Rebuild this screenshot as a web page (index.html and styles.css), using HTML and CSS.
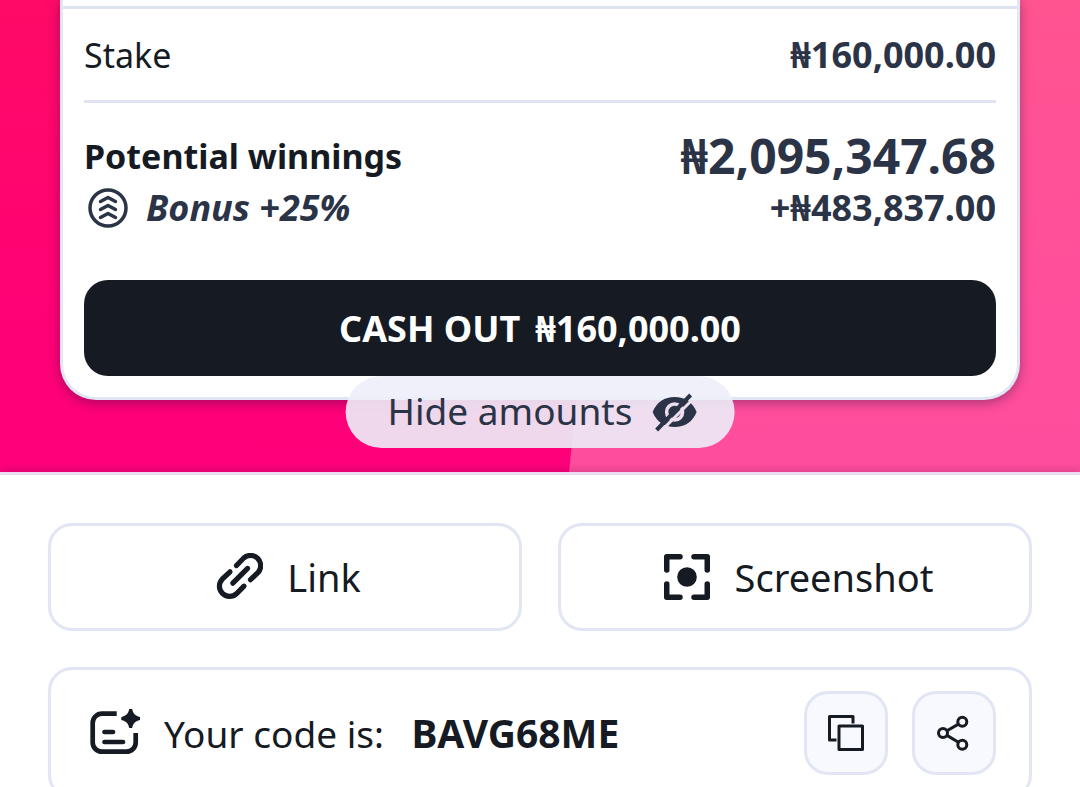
FILE: index.html
```
<!DOCTYPE html>
<html lang="en">

<head>
    <meta charset="utf-8">
    <meta name="viewport" content="width=device-width, initial-scale=1.0">
    <title>Share bet</title>
    <link rel="stylesheet" href="styles.css">
</head>

<body>

    <section class="hero">
        <div class="slip">
            <div class="row stake">
                <span class="label">Stake</span>
                <span class="amount">₦160,000.00</span>
            </div>

            <div class="winnings">
                <div class="row">
                    <strong class="label">Potential winnings</strong>
                    <span class="amount total">₦2,095,347.68</span>
                </div>
                <div class="row">
                    <span class="bonus">
                        <svg width="40" height="40" viewBox="0 0 40 40" fill="none" stroke="currentColor" stroke-width="3.500" stroke-linecap="round" stroke-linejoin="round">
                            <circle cx="20" cy="20" r="18" />
                            <path d="M12.500 13.500l7.500-4 7.500 4M12.500 21.500l7.500-4 7.500 4M12.500 29.500l7.500-4 7.500 4" />
                        </svg>
                        <em>Bonus +25%</em>
                    </span>
                    <span class="amount">+₦483,837.00</span>
                </div>
            </div>

            <button class="cashout"><span>CASH OUT</span><span>₦160,000.00</span></button>
        </div>

        <button class="hide">
            Hide amounts
            <svg width="48" height="48" viewBox="0 0 48 48">
                <mask id="cut">
                    <rect width="48" height="48" fill="#fff" />
                    <circle cx="24" cy="25" r="8" fill="none" stroke="#000" stroke-width="3.500" />
                    <path d="M9 45.500L43 11.500" stroke="#000" stroke-width="3" />
                </mask>
                <path mask="url(#cut)" fill="currentColor" d="M2 25C6 15 14 10 24 10s18 5 22 15c-4 10-12 15-22 15S6 35 2 25z" />
                <path d="M6 43L40 8" stroke="currentColor" stroke-width="4" />
            </svg>
        </button>
    </section>

    <main class="sheet">
        <div class="actions">
            <button class="action">
                <svg width="48" height="48" viewBox="0 0 48 48" fill="none" stroke="currentColor" stroke-width="5.200" stroke-linecap="round">
                    <path d="M21.500 12.500l7.200-7.500a10.200 10.200 0 0 1 14.400 14.400l-7.600 7.300" />
                    <path d="M15 18.800L7 26.400a10.200 10.200 0 0 0 14.400 14.400l7.600-7.600" />
                    <path d="M17.800 30.200L32.600 15.400" />
                </svg>
                Link
            </button>
            <button class="action">
                <svg width="48" height="48" viewBox="0 0 48 48" fill="none" stroke="currentColor" stroke-width="5.500" stroke-linecap="round" stroke-linejoin="round">
                    <path d="M17 3.750H3.750V17M31 3.750h13.250V17M17 44.250H3.750V31M31 44.250h13.250V31" />
                    <circle cx="24" cy="24" r="9.800" fill="currentColor" stroke="none" />
                </svg>
                Screenshot
            </button>
        </div>

        <div class="code">
            <svg width="50" height="48" viewBox="0 0 50 48" fill="none" stroke="currentColor" stroke-width="4.700">
                <path d="M26.700 4.700H12a9.300 9.300 0 0 0-9.300 9.300v19.400a9.300 9.300 0 0 0 9.300 9.300h24.400a9.300 9.300 0 0 0 9.300-9.300V24" />
                <path d="M14.500 23h8.500M14.500 33h18.500" stroke-linecap="round" />
                <path d="M39.200 0h3c.8 4.300 2.700 6.800 7.800 8v3c-5.100 1.200-7 3.700-7.800 8h-3c-.8-4.300-2.700-6.800-7.900-8V8c5.200-1.200 7.100-3.700 7.900-8z" fill="currentColor" stroke="none" />
            </svg>
            <span class="code-text">Your code is: <strong>BAVG68ME</strong></span>
            <button class="icon-btn" aria-label="Copy">
                <svg width="36" height="36" viewBox="0 0 36 36" fill="none" stroke="currentColor" stroke-width="3" stroke-linejoin="round">
                    <path d="M25 8.500V1.500H1.500V25h7" />
                    <path d="M11 11h23.500v23.500H11z" />
                </svg>
            </button>
            <button class="icon-btn" aria-label="Share">
                <svg width="36" height="36" viewBox="0 0 36 36" fill="none" stroke="currentColor" stroke-width="3">
                    <circle cx="7" cy="18" r="4.500" />
                    <circle cx="26.300" cy="6.700" r="4.500" />
                    <circle cx="26.300" cy="29.700" r="4.500" />
                    <path d="M11 15.700l11.400-6.600M11 20.400l11.400 6.900" />
                </svg>
            </button>
        </div>
    </main>

</body>

</html>
```

FILE: styles.css
```
* {
    box-sizing: border-box;
}

body {
    margin: 0;
    background: white;
    color: #151a23;
    font-family: "Noto Sans", sans-serif;
    font-size: 36px;
}

button {
    font: inherit;
    color: inherit;
    border: none;
    cursor: pointer;
}

svg {
    display: block;
    flex: none;
}

.hero {
    position: relative;
    padding: 0 60px 72px;
    background: linear-gradient(#ff0a66, #ff0078 80%, #ff007a);
}

/* lighter slanted half of the backdrop */
.hero::before {
    content: "";
    position: absolute;
    inset: 0;
    background: linear-gradient(#ff5490, #ff4f9b 60%, #ff4d9d);
    clip-path: polygon(57% 0, 100% 0, 100% 100%, 52.7% 100%);
}

.slip {
    position: relative;
    padding: 6px 21px 21px;
    background: white;
    border: 3px solid #e2e5f4;
    border-top: none;
    border-radius: 0 0 36px 36px;
    box-shadow: 0 3px 12px rgba(40, 20, 60, 0.4);
}

.row {
    display: flex;
    align-items: center;
    justify-content: space-between;
}

.label {
    font-size: 34px;
}

.stake {
    position: relative;
    padding: 22px 0 18px;
    line-height: 54px;
    border-bottom: 3px solid #dfe4f3;
}

.stake::before {
    content: "";
    position: absolute;
    top: 0;
    left: -21px;
    right: -21px;
    border-top: 3px solid #dfe4f3;
}

.amount {
    color: #2b3347;
    font-size: 36px;
    font-weight: 700;
}

.total {
    font-size: 48px;
}

.winnings {
    padding: 27px 0 46px;
    line-height: 52px;
}

.bonus {
    display: flex;
    align-items: center;
    gap: 18px;
    padding-left: 4px;
    color: #2b3347;
    font-weight: 700;
}

.cashout {
    display: flex;
    align-items: center;
    justify-content: center;
    gap: 15px;
    width: 100%;
    padding: 22px 21px 20px;
    background: #151a23;
    color: white;
    border-radius: 24px;
    font-weight: 700;
    line-height: 54px;
}

.hide {
    position: absolute;
    left: 50%;
    bottom: 24px;
    transform: translateX(-50%);
    display: flex;
    align-items: center;
    gap: 18px;
    padding: 8px 36px 10px 42px;
    background: rgba(237, 238, 248, 0.9);
    color: #2b3347;
    border-radius: 36px;
    font-size: 37px;
    line-height: 54px;
    white-space: nowrap;
}

.sheet {
    position: relative;
    padding: 48px;
    background: white;
    border-top: 3px solid #eadcf2;
    box-shadow: 0 -2px 8px rgba(60, 20, 80, 0.2);
    font-size: 38px;
    line-height: 54px;
}

.actions {
    display: flex;
    gap: 36px;
    margin-bottom: 36px;
}

.action {
    flex: 1;
    display: flex;
    align-items: center;
    justify-content: center;
    gap: 24px;
    padding: 24px 24px 24px 30px;
    background: white;
    border: 3px solid #e2e6f4;
    border-radius: 24px;
}

.code {
    display: flex;
    align-items: center;
    gap: 24px;
    padding: 21px 33px 21px 39px;
    border: 3px solid #e2e6f4;
    border-radius: 24px;
    font-size: 37px;
}

.code-text {
    flex: 1;
}

.code strong {
    margin-left: 18px;
    font-size: 39px;
}

.icon-btn {
    display: flex;
    align-items: center;
    justify-content: center;
    width: 84px;
    height: 84px;
    padding: 0;
    background: #f8f9fe;
    border: 3px solid #e2e6f4;
    border-radius: 24px;
}
```
